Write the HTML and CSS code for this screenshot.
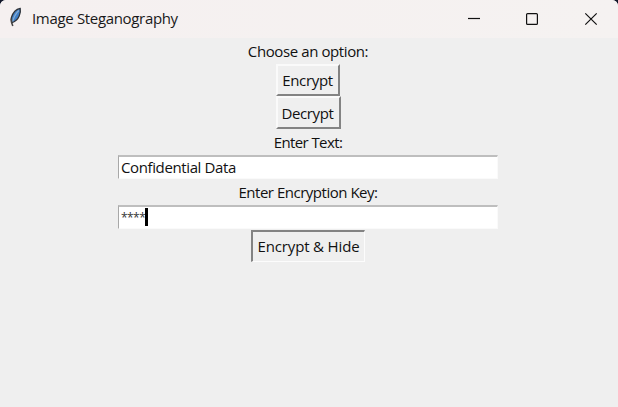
FILE: index.html
```
<!DOCTYPE html>
<html lang="en">
<head>
<meta charset="utf-8">
<title>Image Steganography</title>
<link rel="stylesheet" href="styles.css">
</head>
<body>
<div class="window">
  <header class="titlebar">
    <svg class="feather" width="16" height="22" viewBox="0 0 16 22">
      <path d="M12.200 1.400C8.200 2.200 4.800 6 3.400 10.500c-.5 2-.1 4 .6 5.200 3-1.200 6-3.800 7.200-6.700 1-2.500 1.600-5 1-7.600z" fill="#3f7fc8" stroke="#30343a" stroke-width="1.300"/>
      <path d="M10.800 3.500C7.700 6.500 5.900 10 4.600 14.500" fill="none" stroke="#86abd0" stroke-width="1.200"/>
      <path d="M3.300 11.500c-.3 2 .2 4.500 1.500 7.500" fill="none" stroke="#454545" stroke-width="1.600"/>
    </svg>
    <h1 class="title"><span>Image Steganography</span></h1>
    <div class="controls">
      <svg width="58" height="38" viewBox="0 0 58 38"><path d="M28 18.500h12" class="stroke"/></svg>
      <svg width="58" height="38" viewBox="0 0 58 38"><rect x="28.600" y="13.600" width="10.800" height="10.800" rx="1" class="stroke"/></svg>
      <svg width="60" height="38" viewBox="0 0 60 38"><path d="M29.300 13.300l11.400 11.400M40.700 13.300L29.300 24.700" class="stroke"/></svg>
    </div>
  </header>
  <main class="form">
    <div class="label choose"><span>Choose an option:</span></div>
    <div class="button encrypt"><span>Encrypt</span></div>
    <div class="button decrypt"><span>Decrypt</span></div>
    <div class="label enter-text"><span>Enter Text:</span></div>
    <div class="entry"><span class="value">Confidential Data</span></div>
    <div class="label enter-key"><span>Enter Encryption Key:</span></div>
    <div class="entry"><span class="stars">****</span><i class="caret"></i></div>
    <div class="button pressed"><span>Encrypt &amp; Hide</span></div>
  </main>
</div>
</body>
</html>
```
FILE: styles.css
```
* { box-sizing: border-box; }
body { margin: 0; background: #12172a; font-family: "Open Sans", "Noto Sans", sans-serif; font-size: 15px; color: #111; }
.window { width: 618px; height: 407px; background: #efefef; border-radius: 6px 6px 0 0; overflow: hidden; }
.titlebar { height: 38px; display: flex; align-items: center; background: linear-gradient(90deg, #f5f0f0, #f5f2f1); }
.feather { margin: 0 8px 3px 8px; flex: none; }
.title { margin: 0; font-size: 15px; font-weight: 400; line-height: 36px; padding-bottom: 2px; white-space: nowrap; color: #191919; letter-spacing: -0.33px; }
.controls { display: flex; margin-left: auto; padding-right: 2px; }
.stroke { fill: none; stroke: #111; stroke-width: 1.200; }
.form { display: flex; flex-direction: column; align-items: center; padding-right: 2px; white-space: nowrap; }
.label { height: 26px; line-height: 27px; }
.choose { letter-spacing: -0.4px; }
.enter-text { letter-spacing: -0.6px; }
.enter-key { letter-spacing: -0.48px; }
.button { display: flex; align-items: center; justify-content: center; height: 33px; padding-right: 1px; border: 2px solid; border-color: #fafafa #838383 #838383 #fafafa; letter-spacing: -0.35px; }
.encrypt { width: 64px; height: 32px; }
.decrypt { width: 65px; }
.entry { width: 380px; height: 24px; display: flex; align-items: center; padding-left: 2px; background: #fff; border: solid; border-width: 2px 1px 1px 1px; border-color: #bebebe #fafafa #fafafa #a8a8a8; }
.value { line-height: 21px; letter-spacing: -0.38px; }
.stars { line-height: 21px; font-size: 12px; letter-spacing: -0.55px; color: #333; }
.caret { width: 3px; height: 18px; margin-bottom: 1px; background: #000; }
.pressed { width: 114px; height: 32px; margin-top: 1px; padding: 0 0 1px; border: solid; border-width: 2px 1px 1px 2px; border-color: #838383 #fcfcfc #fcfcfc #838383; letter-spacing: -0.15px; }
```
